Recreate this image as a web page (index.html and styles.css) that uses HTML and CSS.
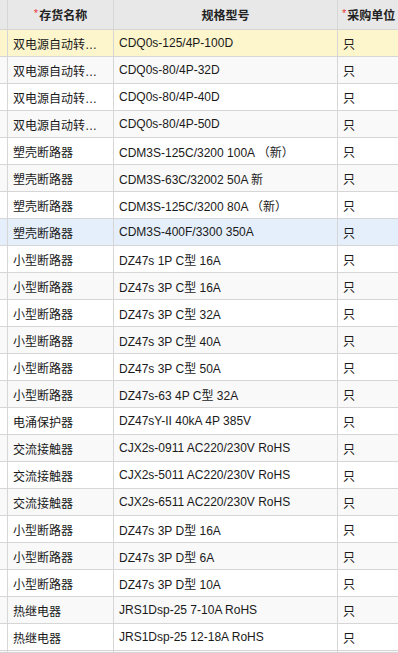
FILE: index.html
```html
<!DOCTYPE html>
<html lang="zh">
<head>
<meta charset="utf-8">
<link rel="stylesheet" href="styles.css">
</head>
<body>
<div class="grid">
  <div class="row head">
    <div class="c c0"></div>
    <div class="c c1 center"><span class="req">*</span>存货名称</div>
    <div class="c c2 center">规格型号</div>
    <div class="c c3 center"><span class="req">*</span>采购单位</div>
  </div>
  <div class="row sel"><div class="c c0"></div><div class="c c1" title="双电源自动转换开关">双电源自动转…</div><div class="c c2">CDQ0s-125/4P-100D</div><div class="c c3">只</div></div>
  <div class="row"><div class="c c0"></div><div class="c c1" title="双电源自动转换开关">双电源自动转…</div><div class="c c2">CDQ0s-80/4P-32D</div><div class="c c3">只</div></div>
  <div class="row"><div class="c c0"></div><div class="c c1" title="双电源自动转换开关">双电源自动转…</div><div class="c c2">CDQ0s-80/4P-40D</div><div class="c c3">只</div></div>
  <div class="row"><div class="c c0"></div><div class="c c1" title="双电源自动转换开关">双电源自动转…</div><div class="c c2">CDQ0s-80/4P-50D</div><div class="c c3">只</div></div>
  <div class="row"><div class="c c0"></div><div class="c c1">塑壳断路器</div><div class="c c2">CDM3S-125C/3200 100A （新）</div><div class="c c3">只</div></div>
  <div class="row"><div class="c c0"></div><div class="c c1">塑壳断路器</div><div class="c c2">CDM3S-63C/32002 50A 新</div><div class="c c3">只</div></div>
  <div class="row"><div class="c c0"></div><div class="c c1">塑壳断路器</div><div class="c c2">CDM3S-125C/3200 80A （新）</div><div class="c c3">只</div></div>
  <div class="row hover"><div class="c c0"></div><div class="c c1">塑壳断路器</div><div class="c c2">CDM3S-400F/3300 350A</div><div class="c c3">只</div></div>
  <div class="row"><div class="c c0"></div><div class="c c1">小型断路器</div><div class="c c2">DZ47s 1P C型 16A</div><div class="c c3">只</div></div>
  <div class="row"><div class="c c0"></div><div class="c c1">小型断路器</div><div class="c c2">DZ47s 3P C型 16A</div><div class="c c3">只</div></div>
  <div class="row"><div class="c c0"></div><div class="c c1">小型断路器</div><div class="c c2">DZ47s 3P C型 32A</div><div class="c c3">只</div></div>
  <div class="row"><div class="c c0"></div><div class="c c1">小型断路器</div><div class="c c2">DZ47s 3P C型 40A</div><div class="c c3">只</div></div>
  <div class="row"><div class="c c0"></div><div class="c c1">小型断路器</div><div class="c c2">DZ47s 3P C型 50A</div><div class="c c3">只</div></div>
  <div class="row"><div class="c c0"></div><div class="c c1">小型断路器</div><div class="c c2">DZ47s-63 4P C型 32A</div><div class="c c3">只</div></div>
  <div class="row"><div class="c c0"></div><div class="c c1">电涌保护器</div><div class="c c2">DZ47sY-II 40kA 4P 385V</div><div class="c c3">只</div></div>
  <div class="row"><div class="c c0"></div><div class="c c1">交流接触器</div><div class="c c2">CJX2s-0911 AC220/230V RoHS</div><div class="c c3">只</div></div>
  <div class="row"><div class="c c0"></div><div class="c c1">交流接触器</div><div class="c c2">CJX2s-5011 AC220/230V RoHS</div><div class="c c3">只</div></div>
  <div class="row"><div class="c c0"></div><div class="c c1">交流接触器</div><div class="c c2">CJX2s-6511 AC220/230V RoHS</div><div class="c c3">只</div></div>
  <div class="row"><div class="c c0"></div><div class="c c1">小型断路器</div><div class="c c2">DZ47s 3P D型 16A</div><div class="c c3">只</div></div>
  <div class="row"><div class="c c0"></div><div class="c c1">小型断路器</div><div class="c c2">DZ47s 3P D型 6A</div><div class="c c3">只</div></div>
  <div class="row"><div class="c c0"></div><div class="c c1">小型断路器</div><div class="c c2">DZ47s 3P D型 10A</div><div class="c c3">只</div></div>
  <div class="row"><div class="c c0"></div><div class="c c1">热继电器</div><div class="c c2">JRS1Dsp-25 7-10A RoHS</div><div class="c c3">只</div></div>
  <div class="row"><div class="c c0"></div><div class="c c1">热继电器</div><div class="c c2">JRS1Dsp-25 12-18A RoHS</div><div class="c c3">只</div></div>
  <div class="row last"><div class="c c0"></div><div class="c c1"></div><div class="c c2"></div><div class="c c3"></div></div>
</div>
</body>
</html>
```

FILE: styles.css
```css
html, body {
  margin: 0;
  padding: 0;
  background: #ffffff;
  overflow: hidden;
}
body {
  width: 398px;
  height: 653px;
  font-family: "Liberation Sans", Arial, "Noto Sans CJK SC", sans-serif;
  font-size: 12px;
  color: #1a1a1a;
}
.grid {
  width: 398px;
}
.row {
  display: grid;
  grid-template-columns: 8px 106px 224px 60px;
  height: 27px;
  background: #ffffff;
}
.row:nth-child(odd) {
  background: #f9f9f9;
}
.row.head {
  height: 30px;
  background: #e8e8e8;
  font-weight: bold;
  color: #222;
}
.row.sel {
  background: #fdf6cd;
}
.row.hover {
  background: #e5effb;
}
.row.last {
  height: 2px;
}
.c {
  box-sizing: border-box;
  border-right: 1px solid #d6d6d6;
  border-bottom: 1px solid #d6d6d6;
  padding: 0 5px;
  display: flex;
  align-items: center;
  white-space: nowrap;
  overflow: hidden;
  min-width: 0;
}
.c3 {
  border-right: none;
}
.c0 {
  padding: 0;
}
.center {
  justify-content: center;
  text-align: center;
}
.head .c3 {
  justify-content: flex-start;
  padding-left: 4px;
}
.req {
  color: #e8383d;
  font-weight: normal;
  margin-right: 1px;
  font-size: 11px;
  position: relative;
  top: -2px;
}
```
